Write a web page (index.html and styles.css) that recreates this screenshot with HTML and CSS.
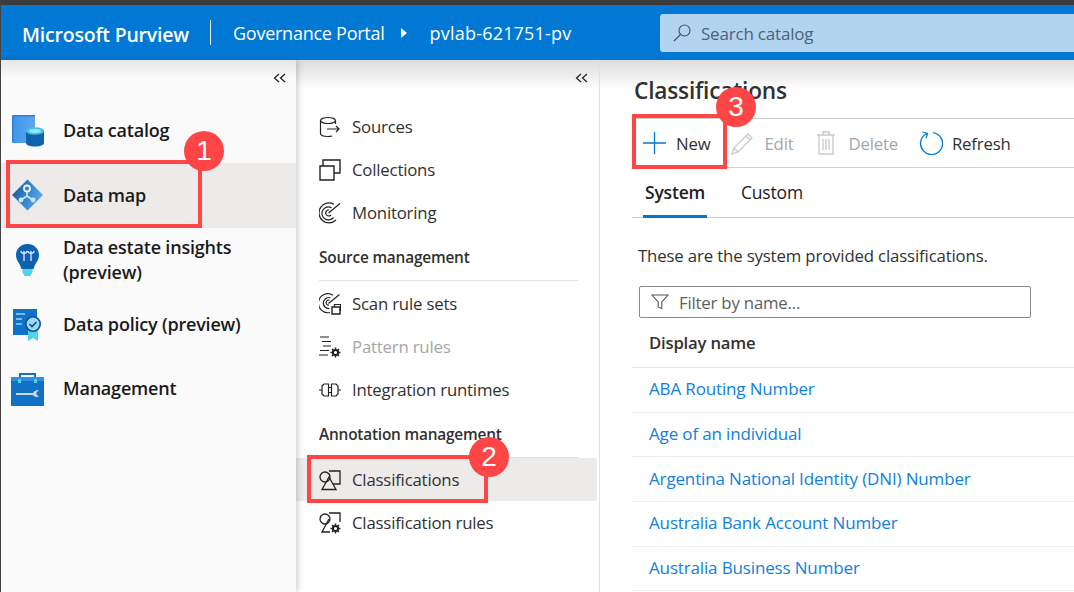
FILE: index.html
```html
<!DOCTYPE html>
<html lang="en">
<head>
    <meta charset="UTF-8">
    <meta name="viewport" content="width=device-width, initial-scale=1.0">
    <title>Microsoft Purview - Classifications</title>
    <link rel="stylesheet" href="styles.css">
</head>
<body>
<div class="page">

    <!-- Top bar -->
    <header class="topbar">
        <div class="brand">Microsoft Purview</div>
        <div class="crumbs">
            <span>Governance Portal</span>
            <svg class="caret" width="8" height="12" viewBox="0 0 8 12"><path d="M1 1l6 5-6 5z" fill="#fff"/></svg>
            <span class="crumb-account">pvlab-621751-pv</span>
        </div>
        <div class="search">
            <svg width="20" height="20" viewBox="0 0 20 20" fill="none" stroke="#44586b" stroke-width="1.2"><circle cx="12.5" cy="7.5" r="5.5"/><path d="M8.5 11.5L2 18"/></svg>
            <span>Search catalog</span>
        </div>
    </header>

    <div class="main">

        <!-- Primary nav -->
        <nav class="nav-primary">
            <div class="collapse"><svg width="14" height="10" viewBox="0 0 14 10" fill="none" stroke="#222" stroke-width="1.3"><path d="M6 1L1.500 5 6 9M12 1L7.500 5l4.500 4"/></svg></div>
            <a class="nav-item">
                <svg class="nav-icon" width="36" height="36" viewBox="0 0 36 36">
                    <defs>
                        <linearGradient id="bookFill" x1="0" y1="0" x2="1" y2="0"><stop offset="0" stop-color="#3f96ec"/><stop offset="1" stop-color="#5ea6ee"/></linearGradient>
                        <linearGradient id="mapFill" x1="0" y1="0" x2="1" y2="0.4"><stop offset="0" stop-color="#0a5596"/><stop offset="1" stop-color="#55a6ee"/></linearGradient>
                    </defs>
                    <path d="M2 3.500Q2 2 3.500 2H25v28H3.500Q2 30 2 28.500z" fill="url(#bookFill)"/>
                    <path d="M3.500 2H25v1.500H5Q3.500 3.500 3.500 5V30Q2 30 2 28.500V3.500Q2 2 3.500 2z" fill="#2a7fd6"/>
                    <path d="M16 18v12c0 2 4 3.500 9 3.500s9-1.500 9-3.500V18z" fill="#0f62ae"/>
                    <ellipse cx="25" cy="18" rx="9" ry="3.800" fill="#40c4e6"/>
                    <ellipse cx="25" cy="18" rx="6" ry="2" fill="#9be4f2"/>
                </svg>
                <span>Data catalog</span>
            </a>
            <a class="nav-item nav-item-active">
                <svg class="nav-icon" width="36" height="36" viewBox="0 0 36 36">
                    <path d="M17.500 2.500L33 18 17.500 33.500 2 18z" fill="url(#mapFill)"/>
                    <path d="M17 14v5M17 19l-6 4M17 19l6 4" stroke="#cfe6fa" stroke-width="1.600" fill="none"/>
                    <circle cx="17" cy="11.500" r="3" fill="none" stroke="#e8f4ff" stroke-width="1.800"/>
                    <circle cx="11" cy="23" r="2.400" fill="#cfe6fa"/>
                    <circle cx="23" cy="23" r="2.400" fill="#cfe6fa"/>
                </svg>
                <span>Data map</span>
            </a>
            <a class="nav-item">
                <svg class="nav-icon" width="36" height="36" viewBox="0 0 36 36">
                    <path d="M17.500 2C9.500 2 6 8 6 13c0 6 4 8 5.500 14h12c1.500-6 5.500-8 5.500-14 0-5-3.500-11-11.500-11z" fill="#0f62ae"/>
                    <path d="M12.500 27h10v3l-2 4h-6l-2-4z" fill="#50d4ee"/>
                    <path d="M14 9v10M21 9v10M11 9c0 3 6 3 6 0M18 9c0 3 6 3 6 0" fill="none" stroke="#d6ecff" stroke-width="1.300"/>
                </svg>
                <span>Data estate insights<br>(preview)</span>
            </a>
            <a class="nav-item">
                <svg class="nav-icon" width="36" height="36" viewBox="0 0 36 36">
                    <path d="M3 3h24v26H3z" fill="#0f72c8"/>
                    <path d="M6 8h9M6 13h6M6 18h6" stroke="#9fd0f5" stroke-width="1.400"/>
                    <path d="M18 24v11l5-3 5 3V24z" fill="#50d4ee"/>
                    <circle cx="23" cy="18" r="7.200" fill="#9fd8f2" stroke="#0f4f8f" stroke-width="1.600"/>
                    <path d="M19.500 18l2.500 2.500 4.500-4.500" fill="none" stroke="#0f4f8f" stroke-width="1.700"/>
                </svg>
                <span>Data policy (preview)</span>
            </a>
            <a class="nav-item">
                <svg class="nav-icon" width="36" height="36" viewBox="0 0 36 36">
                    <path d="M10 7V3h15v4" fill="none" stroke="#0f72c8" stroke-width="2"/>
                    <path d="M1 6h33v29H1z" fill="#0f72c8"/>
                    <path d="M1 6h33v4H1z" fill="#2f8fe0"/>
                    <path d="M8 8h3v4H8zM24 8h3v4h-3z" fill="#50d4ee"/>
                    <path d="M6 22h17c1-2 3-3 6-3l-2.500 2.500 0 2 2.500 2c-2 1-5 .5-6-1.500H6z" fill="#d4d8dc"/>
                </svg>
                <span>Management</span>
            </a>
        </nav>

        <!-- Secondary nav -->
        <nav class="nav-secondary">
            <div class="collapse collapse-secondary"><svg width="14" height="10" viewBox="0 0 14 10" fill="none" stroke="#222" stroke-width="1.300"><path d="M6 1L1.500 5 6 9M12 1L7.500 5l4.500 4"/></svg></div>
            <a class="sub-item">
                <svg width="22" height="22" viewBox="0 0 22 22" fill="none" stroke="#222" stroke-width="1.200"><ellipse cx="9" cy="4.500" rx="7.500" ry="3"/><path d="M1.500 4.500v13c0 2 3 3 7.500 3 1.500 0 3-.2 4-.5M16.500 4.500V8M8 13h12M17 10l3 3-3 3"/></svg>
                <span>Sources</span>
            </a>
            <a class="sub-item">
                <svg width="22" height="22" viewBox="0 0 22 22" fill="none" stroke="#222" stroke-width="1.400"><path d="M4 7V1h17v13h-6"/><path d="M1 7h14v14H1z"/></svg>
                <span>Collections</span>
            </a>
            <a class="sub-item">
                <svg width="22" height="22" viewBox="0 0 22 22" fill="none" stroke="#222" stroke-width="1.200"><path d="M17 18a10 10 0 1 1-2-15.800M14.500 15.500a6.500 6.500 0 1 1-2-9.800M12 13a3 3 0 1 1-2-5M9.500 11L21 1.500"/></svg>
                <span>Monitoring</span>
            </a>
            <div class="sub-head">Source management</div>
            <a class="sub-item">
                <svg width="22" height="22" viewBox="0 0 22 22" fill="none" stroke="#222" stroke-width="1.200"><path d="M11 19.500a9.500 9.500 0 1 1 3-17.300M10.500 15.500a5.500 5.500 0 1 1 1-10.700M10 12a2.500 2.500 0 1 1 .5-4.800M9.500 10.500L20.500 1.500"/><path d="M13 14h8v7h-8z" fill="#fff" stroke-width="1.400"/><path d="M15.500 14v-2.500h6v6h-1"/></svg>
                <span>Scan rule sets</span>
            </a>
            <a class="sub-item sub-item-disabled">
                <svg width="22" height="22" viewBox="0 0 22 22" fill="none" stroke="#222" stroke-width="1.200"><path d="M1 1h9M3 5.500h9M4 10h8M1 14.500h9M0 19h9"/><circle cx="16.500" cy="16.500" r="2.600" stroke-width="2"/><path d="M16.500 11.500v2M16.500 19.500v2M11.500 16.500h2M19.500 16.500h2M13 13l1.500 1.500M18.500 18.500L20 20M13 20l1.500-1.500M18.500 14.500L20 13" stroke-width="1.500"/></svg>
                <span>Pattern rules</span>
            </a>
            <a class="sub-item">
                <svg width="22" height="22" viewBox="0 0 22 22" fill="none" stroke="#222" stroke-width="1.200"><path d="M0 11h3M19 11h3M3 7l2-2h4.500v8.500h3V5H17l2 2v8l-2 2h-4.500V8.500h-3V17H5l-2-2z"/></svg>
                <span>Integration runtimes</span>
            </a>
            <div class="sub-head sub-head-tight">Annotation management</div>
            <a class="sub-item sub-item-active">
                <svg width="22" height="22" viewBox="0 0 22 22" fill="none" stroke="#222" stroke-width="1.300"><circle cx="6" cy="8" r="5"/><path d="M10 2h11v13h-7"/><path d="M10 8L3 20.500h14z"/></svg>
                <span>Classifications</span>
            </a>
            <a class="sub-item">
                <svg width="22" height="22" viewBox="0 0 22 22" fill="none" stroke="#222" stroke-width="1.300"><circle cx="6" cy="7" r="5"/><path d="M10 1h11v9"/><path d="M10 7L3 20h8"/><circle cx="16.500" cy="16.500" r="2.600" stroke-width="2"/><path d="M16.500 11.500v2M16.500 19.500v2M11.500 16.500h2M19.500 16.500h2M13 13l1.500 1.500M18.500 18.500L20 20M13 20l1.500-1.500M18.500 14.500L20 13" stroke-width="1.500"/></svg>
                <span>Classification rules</span>
            </a>
        </nav>

        <!-- Content -->
        <section class="content">
            <h1 class="title">Classifications</h1>
            <div class="toolbar">
                <button class="tool tool-new" type="button">
                    <svg width="23" height="24" viewBox="0 0 23 24" stroke="#0078d4" stroke-width="1.300"><path d="M11.500 1v22M0 12h23"/></svg>
                    <span>New</span>
                </button>
                <button class="tool tool-edit tool-disabled" type="button">
                    <svg width="23" height="24" viewBox="0 0 23 24" fill="none" stroke="#c8c8c8" stroke-width="1.300"><path d="M1 23l2-6L17 3l4 4L7 21zM3 17l4 4M15 5l4 4"/></svg>
                    <span>Edit</span>
                </button>
                <button class="tool tool-delete tool-disabled" type="button">
                    <svg width="20" height="24" viewBox="0 0 20 24" fill="none" stroke="#c8c8c8" stroke-width="1.300"><path d="M1 4h18M7 4V1h6v3M3 4v19h14V4M7 8v11M10 8v11M13 8v11"/></svg>
                    <span>Delete</span>
                </button>
                <button class="tool tool-refresh" type="button">
                    <svg width="24" height="24" viewBox="0 0 24 24" fill="none" stroke="#0078d4" stroke-width="1.300"><path d="M8 2.500a11 11 0 1 0 6-.9M3.500 1L8.500 2.500 7 7"/></svg>
                    <span>Refresh</span>
                </button>
            </div>
            <div class="tabs">
                <a class="tab tab-active">System</a>
                <a class="tab">Custom</a>
            </div>
            <p class="intro">These are the system provided classifications.</p>
            <div class="filter">
                <svg width="18" height="16" viewBox="0 0 18 16" fill="none" stroke="#555" stroke-width="1.100"><path d="M1 1h16l-6.200 7v6.500l-3.600-1.500V8z"/></svg>
                <span>Filter by name...</span>
            </div>
            <div class="col-head">Display name</div>
            <ul class="rows">
                <li><a>ABA Routing Number</a></li>
                <li><a>Age of an individual</a></li>
                <li><a>Argentina National Identity (DNI) Number</a></li>
                <li><a>Australia Bank Account Number</a></li>
                <li><a>Australia Business Number</a></li>
            </ul>
        </section>
    </div>

    <!-- Callouts drawn over the screenshot -->
    <div class="mark mark-1"></div>
    <div class="mark mark-2"></div>
    <div class="mark mark-3"></div>
    <div class="badge badge-1">1</div>
    <div class="badge badge-2">2</div>
    <div class="badge badge-3">3</div>
</div>
</body>
</html>
```

FILE: styles.css
```css
* {
    box-sizing: border-box;
}

html, body {
    margin: 0;
    height: 100%;
    overflow: hidden;
}

body {
    font-family: "Open Sans", "Noto Sans", Arial, sans-serif;
    background: #fff;
    color: #222;
}

.page {
    position: relative;
    width: 1074px;
    height: 592px;
    overflow: hidden;
    border-top: 5px solid #3c3c3c;
    border-left: 1px solid #444;
    display: flex;
    flex-direction: column;
}

/* Top bar */
.topbar {
    height: 55px;
    flex: none;
    background: #0078d4;
    color: #fff;
    display: flex;
    align-items: center;
    padding-left: 21px;
}

.brand {
    font-size: 19.5px;
    font-weight: 600;
    letter-spacing: -0.2px;
    width: 189px;
    height: 25px;
    padding-right: 21px;
    border-right: 1px solid #e6f2fb;
    line-height: 29px;
    white-space: nowrap;
}

.crumbs {
    display: flex;
    align-items: center;
    padding-left: 22px;
    width: 449px;
    font-size: 18px;
    letter-spacing: -0.25px;
}

.crumb-account {
    letter-spacing: 0.2px;
}

.caret {
    margin: 0 22px 0 15px;
}

.search {
    flex: 1;
    height: 38px;
    margin-top: 1px;
    background: #b3d4f0;
    border-radius: 3px 0 0 3px;
    display: flex;
    align-items: center;
    padding-left: 12px;
    gap: 9px;
    color: #4c6275;
    font-size: 17px;
    letter-spacing: -0.2px;
}

/* Columns */
.main {
    flex: 1;
    display: flex;
    min-height: 0;
}

.nav-primary {
    width: 295px;
    flex: none;
    background: linear-gradient(#e6e6e6, #fafafa 18px);
    box-shadow: 2px 0 6px rgba(0, 0, 0, 0.18);
    position: relative;
    z-index: 2;
    padding-top: 38.500px;
}

.collapse {
    position: absolute;
    top: 12px;
    right: 9px;
    line-height: 10px;
}

.nav-item {
    height: 64.500px;
    display: flex;
    align-items: center;
    font-size: 18px;
    font-weight: 600;
    letter-spacing: -0.2px;
    line-height: 25px;
    color: #1a1a1a;
    padding-left: 9px;
}

.nav-item-active {
    background: #edebe9;
}

.nav-icon {
    flex: none;
    margin-right: 17px;
}

.nav-secondary {
    width: 304px;
    flex: none;
    position: relative;
    padding-top: 45px;
    border-right: 1px solid #e1e1e1;
    background: linear-gradient(#dcdcdc, #fff 30px);
}

.collapse-secondary {
    right: 10px;
}

.sub-item {
    height: 43px;
    display: flex;
    align-items: center;
    gap: 11px;
    padding-left: 23px;
    margin-right: 2px;
    font-size: 16.800px;
    letter-spacing: -0.2px;
    color: #323130;
}

.sub-item-disabled span {
    color: #a6a6a6;
}

.sub-item-active {
    background: #edebe9;
    border-radius: 0 3px 3px 0;
}

.sub-head {
    margin: 0 21px 1px 23px;
    height: 47px;
    padding-top: 13px;
    font-size: 15.400px;
    font-weight: 600;
    letter-spacing: -0.2px;
    line-height: 22px;
    color: #323130;
    border-bottom: 1px solid #e3e3e3;
}

.sub-head-tight {
    margin-bottom: 0;
}

/* Content */
.content {
    flex: 1;
    padding-left: 32px;
    background: linear-gradient(#dcdcdc, #fff 30px);
    min-width: 0;
}

.title {
    margin: 0;
    padding-left: 2px;
    height: 58px;
    padding-top: 16px;
    font-size: 22.700px;
    line-height: 30px;
    font-weight: 600;
    letter-spacing: -0.2px;
    color: #323130;
}

.toolbar {
    height: 50px;
    display: flex;
    align-items: center;
    border-top: 1px solid #cfcfcf;
    border-bottom: 1px solid #cfcfcf;
}

.tool {
    display: flex;
    align-items: center;
    background: none;
    border: 0;
    padding: 0;
    font: inherit;
    font-size: 16.800px;
    letter-spacing: -0.2px;
    color: #323130;
}

.tool-new {
    margin-left: 11px;
    gap: 10px;
}

.tool-edit {
    margin-left: 21px;
    gap: 10px;
}

.tool-delete {
    margin-left: 23px;
    gap: 12px;
}

.tool-refresh {
    margin-left: 21px;
    gap: 9px;
}

.tool-disabled span {
    color: #a6a6a6;
}

.tabs {
    height: 50px;
    display: flex;
    border-bottom: 1px solid #cfcfcf;
    font-size: 17.500px;
    letter-spacing: -0.2px;
    padding-left: 11px;
    gap: 32px;
}

.tab {
    display: flex;
    align-items: center;
    height: 50px;
    padding: 0 2px;
    border-bottom: 3px solid transparent;
}

.tab-active {
    font-weight: 600;
    border-bottom-color: #0078d4;
}

.intro {
    margin: 27px 0 0 6px;
    font-size: 16.800px;
    letter-spacing: -0.15px;
    line-height: 22px;
    color: #323130;
}

.filter {
    margin: 19px 0 0 7px;
    width: 392px;
    height: 32px;
    border: 1px solid #8a8a8a;
    border-radius: 2px;
    display: flex;
    align-items: center;
    gap: 10px;
    padding-left: 11px;
    font-size: 16.800px;
    letter-spacing: -0.2px;
    color: #605e5c;
}

.col-head {
    height: 50px;
    padding: 14px 0 0 17px;
    font-size: 16.700px;
    font-weight: 600;
    letter-spacing: -0.2px;
    line-height: 22px;
    color: #323130;
    border-bottom: 1px solid #e8e8e8;
}

.rows {
    list-style: none;
    margin: 0;
    padding: 0;
}

.rows li {
    height: 44.700px;
    display: flex;
    align-items: center;
    padding: 0 0 2px 17px;
    border-bottom: 1px solid #eee;
    font-size: 17px;
    letter-spacing: -0.15px;
    color: #1081dc;
}

/* Callouts */
.mark {
    position: absolute;
    border: 4px solid #ff4546;
    z-index: 5;
}

.mark-1 {
    left: 5px;
    top: 155px;
    width: 196px;
    height: 68px;
}

.mark-2 {
    left: 306px;
    top: 450px;
    width: 181px;
    height: 48px;
}

.mark-3 {
    left: 631px;
    top: 109px;
    width: 95px;
    height: 55px;
}

.badge {
    position: absolute;
    width: 40px;
    height: 40px;
    border-radius: 50%;
    background: #ff4546;
    color: #fff;
    font-family: "Liberation Sans", Arial, sans-serif;
    font-size: 28px;
    line-height: 40px;
    text-align: center;
    z-index: 6;
}

.badge-1 {
    left: 183px;
    top: 126px;
}

.badge-2 {
    left: 468px;
    top: 432px;
}

.badge-3 {
    left: 715px;
    top: 82px;
}
```
